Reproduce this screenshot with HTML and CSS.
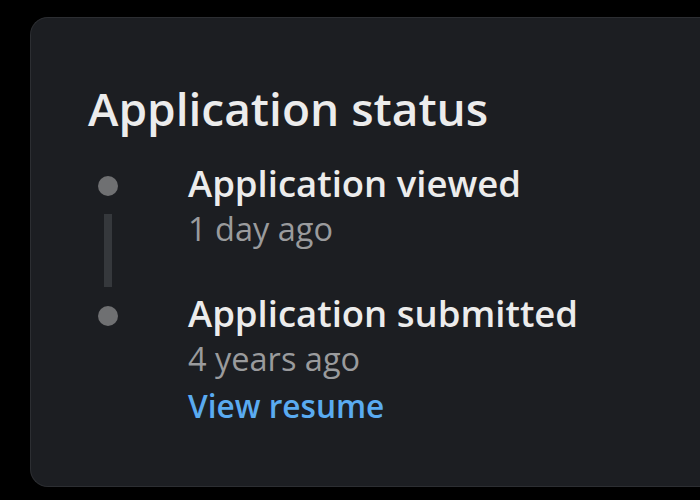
FILE: index.html
```html
<!DOCTYPE html>
<html lang="en">
<head>
<meta charset="UTF-8">
<meta name="viewport" content="width=device-width, initial-scale=1.0">
<title>Application status</title>
<link rel="stylesheet" href="styles.css">
</head>
<body>

<div class="card">
  <h2 class="card-title">Application status</h2>
  <ul class="timeline">
    <li class="step">
      <div class="marker">
        <span class="dot"></span>
        <span class="line"></span>
      </div>
      <div class="info">
        <div class="step-title">Application viewed</div>
        <div class="step-time">1 day ago</div>
      </div>
    </li>
    <li class="step">
      <div class="marker">
        <span class="dot"></span>
      </div>
      <div class="info">
        <div class="step-title">Application submitted</div>
        <div class="step-time">4 years ago</div>
        <a class="step-link" href="#">View resume</a>
      </div>
    </li>
  </ul>
</div>

</body>
</html>
```

FILE: styles.css
```css
body {
  margin: 0;
  background: #000;
  font-family: "Open Sans", "Noto Sans", sans-serif;
  color: #e8e8e8;
  overflow: hidden;
}
.card {
  margin: 17px 0 0 30px;
  width: 670px;
  height: 470px;
  box-sizing: border-box;
  background: #1c1e22;
  border: 1px solid #2c2e32;
  border-right: none;
  border-radius: 18px 0 0 18px;
  padding: 64px 0 0 57px;
}
.card-title {
  margin: 0;
  font-size: 46px;
  font-weight: 600;
  line-height: 52px;
  color: #ececec;
}
.timeline {
  list-style: none;
  margin: 26px 0 0;
  padding: 0;
}
.step {
  display: flex;
}
.marker {
  width: 40px;
  margin-right: 60px;
  display: flex;
  flex-direction: column;
  align-items: center;
  padding-top: 16px;
}
.dot {
  width: 20px;
  height: 20px;
  border-radius: 50%;
  background: #6f7072;
}
.line {
  width: 8px;
  height: 73px;
  margin-top: 18px;
  background: #35383c;
}
.info {
  padding-bottom: 38px;
}
.step-title {
  font-size: 36.5px;
  font-weight: 600;
  line-height: 46px;
  color: #ececec;
}
.step-time {
  font-size: 32.5px;
  line-height: 46px;
  color: #9a9b9d;
}
.step-link {
  display: block;
  font-size: 31.6px;
  font-weight: 600;
  line-height: 48px;
  color: #5aabf1;
  text-decoration: none;
}
```
